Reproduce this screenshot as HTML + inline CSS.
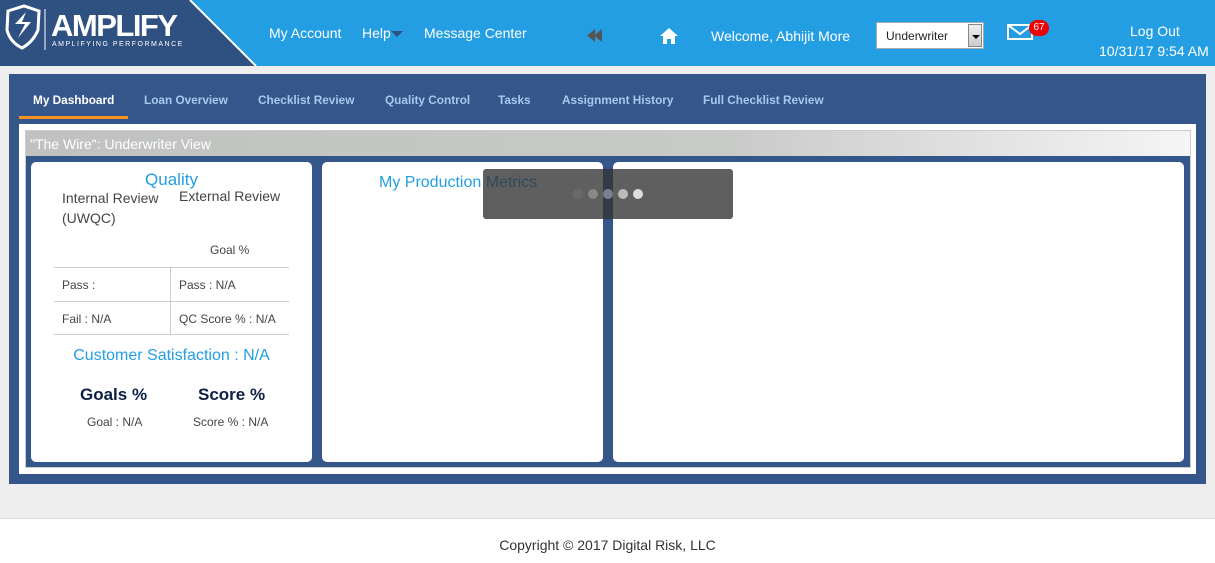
<!DOCTYPE html>
<html><head><style>
*{margin:0;padding:0;box-sizing:border-box}
body{width:1215px;height:563px;background:#fff;font-family:"Liberation Sans",Arial,sans-serif;position:relative;overflow:hidden}
.a{position:absolute}
.hdr{left:0;top:0;width:1215px;height:66px;background:#239ee3}
.w{color:#fff;font-size:14px}
.tab{top:93px;font-size:11.8px;font-weight:bold;color:#a9c8ee}
.card{background:#fff;border-radius:5px;top:162px;height:300px}
.t{font-size:12px;color:#444}
.cell{border-top:1px solid #ccc;height:34px;font-size:12px;color:#444;padding:10px 8px}
</style></head><body>
<div class="a" style="left:0;top:66px;width:1215px;height:453px;background:#eeeeee;border-bottom:1px solid #ddd"></div>
<div class="a hdr"></div>
<svg class="a" style="left:0;top:0" width="260" height="66"><polygon points="0,0 190,0 256,66 0,66" fill="#2f5182"/><line x1="190" y1="0" x2="256" y2="66" stroke="#fff" stroke-width="2"/>
<path d="M8 11 L24 6 L39 11 L38 30 Q33 42 22 48 Q10 42 7 30Z" fill="none" stroke="#fff" stroke-width="3"/>
<path d="M26 12 L15 24 L25 24 L18 38 L31 22 L22 22Z" fill="#fff"/>
<line x1="45" y1="9" x2="45" y2="50" stroke="#fff" stroke-width="1"/></svg>
<div class="a" style="left:51px;top:8px;color:#fff;font-size:31px;font-weight:bold;letter-spacing:-1.5px">AMPLIFY</div>
<div class="a" style="left:52px;top:41px;color:#fff;font-size:7px;letter-spacing:1.5px">AMPLIFYING PERFORMANCE</div>
<div class="a w" style="left:269px;top:25px">My Account</div>
<div class="a w" style="left:362px;top:25px">Help</div>
<div class="a" style="left:391px;top:31px;border:6px solid transparent;border-top:6px solid #2f5182;border-bottom:0"></div>
<div class="a w" style="left:424px;top:25px">Message Center</div>
<svg class="a" style="left:587px;top:29px" width="16" height="13"><path d="M8 0 L0 6.5 L8 13Z M15 0 L7 6.5 L15 13Z" fill="#555"/></svg>
<svg class="a" style="left:660px;top:28px" width="18" height="16"><path d="M9 0 L18 8 L15 8 L15 16 L11 16 L11 11 L7 11 L7 16 L3 16 L3 8 L0 8Z" fill="#fff"/></svg>
<div class="a w" style="left:711px;top:28px">Welcome, Abhijit More</div>
<div class="a" style="left:876px;top:22px;width:108px;height:27px;background:#fff;border:1px solid #aaa"><span style="position:absolute;left:9px;top:6px;font-size:12px;color:#222">Underwriter</span><div style="position:absolute;right:1px;top:1px;width:14px;height:23px;background:linear-gradient(#eee,#ccc);border:1px solid #888"><div style="position:absolute;left:3px;top:10px;border:4px solid transparent;border-top:4px solid #000;border-bottom:0"></div></div></div>
<svg class="a" style="left:1007px;top:24px" width="26" height="16"><rect x="1" y="1" width="24" height="14" fill="none" stroke="#fff" stroke-width="2"/><path d="M1 1 L13 10 L25 1" fill="none" stroke="#fff" stroke-width="2"/></svg>
<div class="a" style="left:1029px;top:20px;width:20px;height:16px;border-radius:8px;background:#e00;color:#fff;font-size:10px;text-align:center;line-height:16px">67</div>
<div class="a w" style="left:1130px;top:23px">Log Out</div>
<div class="a w" style="left:1099px;top:43px">10/31/17 9:54 AM</div>

<div class="a" style="left:9px;top:74px;width:1197px;height:410px;background:#34568a"></div>
<div class="a tab" style="left:33px;color:#fff">My Dashboard</div>
<div class="a" style="left:19px;top:116px;width:109px;height:3px;background:#f7931e"></div>
<div class="a tab" style="left:144px">Loan Overview</div>
<div class="a tab" style="left:258px">Checklist Review</div>
<div class="a tab" style="left:385px">Quality Control</div>
<div class="a tab" style="left:498px">Tasks</div>
<div class="a tab" style="left:562px">Assignment History</div>
<div class="a tab" style="left:703px">Full Checklist Review</div>
<div class="a" style="left:19px;top:124px;width:1177px;height:350px;background:#fff"></div>
<div class="a" style="left:25px;top:130px;width:1166px;height:338px;border:1px solid #ccc;background:#34568a"></div>
<div class="a" style="left:26px;top:131px;width:1164px;height:25px;background:linear-gradient(90deg,#bfc2bf,#c8cac8 60%,#f5f5f5)"><span style="position:absolute;left:4px;top:5px;color:#fff;font-size:14px">"The Wire": Underwriter View</span></div>
<div class="a card" style="left:31px;width:281px">
 <div class="a" style="left:0;width:281px;top:8px;text-align:center;color:#239ee3;font-size:17px">Quality</div>
 <div class="a" style="left:31px;top:26px;font-size:14px;color:#444;line-height:20px">Internal Review<br>(UWQC)</div>
 <div class="a" style="left:148px;top:26px;font-size:14px;color:#444">External Review</div>
 <div class="a t" style="left:179px;top:81px">Goal %</div>
 <div class="a" style="left:23px;top:105px;width:235px">
  <div style="display:flex"><div class="cell" style="width:117px;border-right:1px solid #ccc">Pass :</div><div class="cell" style="width:118px">Pass : N/A</div></div>
  <div style="display:flex"><div class="cell" style="width:117px;border-right:1px solid #ccc;border-bottom:1px solid #ccc">Fail : N/A</div><div class="cell" style="width:118px;border-bottom:1px solid #ccc">QC Score % : N/A</div></div>
 </div>
 <div class="a" style="left:0;width:281px;top:185px;text-align:center;color:#239ee3;font-size:16px">Customer Satisfaction : N/A</div>
 <div class="a" style="left:49px;top:223px;font-size:17px;font-weight:bold;color:#0d1f44">Goals %</div>
 <div class="a" style="left:167px;top:223px;font-size:17px;font-weight:bold;color:#0d1f44">Score %</div>
 <div class="a t" style="left:56px;top:253px">Goal : N/A</div>
 <div class="a t" style="left:162px;top:253px">Score % : N/A</div>
</div>
<div class="a card" style="left:322px;width:281px"><div class="a" style="left:57px;top:12px;color:#239ee3;font-size:16px">My Production Metrics</div></div>
<div class="a card" style="left:613px;width:571px"></div>
<div class="a" style="left:483px;top:169px;width:250px;height:50px;border-radius:3px;background:rgba(50,50,50,0.78)"></div>
<div class="a" style="left:573px;top:189px;display:flex;gap:5px">
<span style="width:10px;height:10px;border-radius:5px;background:#6a6a6a"></span><span style="width:10px;height:10px;border-radius:5px;background:#888"></span><span style="width:10px;height:10px;border-radius:5px;background:#7a8090"></span><span style="width:10px;height:10px;border-radius:5px;background:#bbb"></span><span style="width:10px;height:10px;border-radius:5px;background:#ddd"></span></div>
<div class="a" style="left:0;width:1215px;top:537px;text-align:center;font-size:14px;color:#333">Copyright © 2017 Digital Risk, LLC</div>
</body></html>
